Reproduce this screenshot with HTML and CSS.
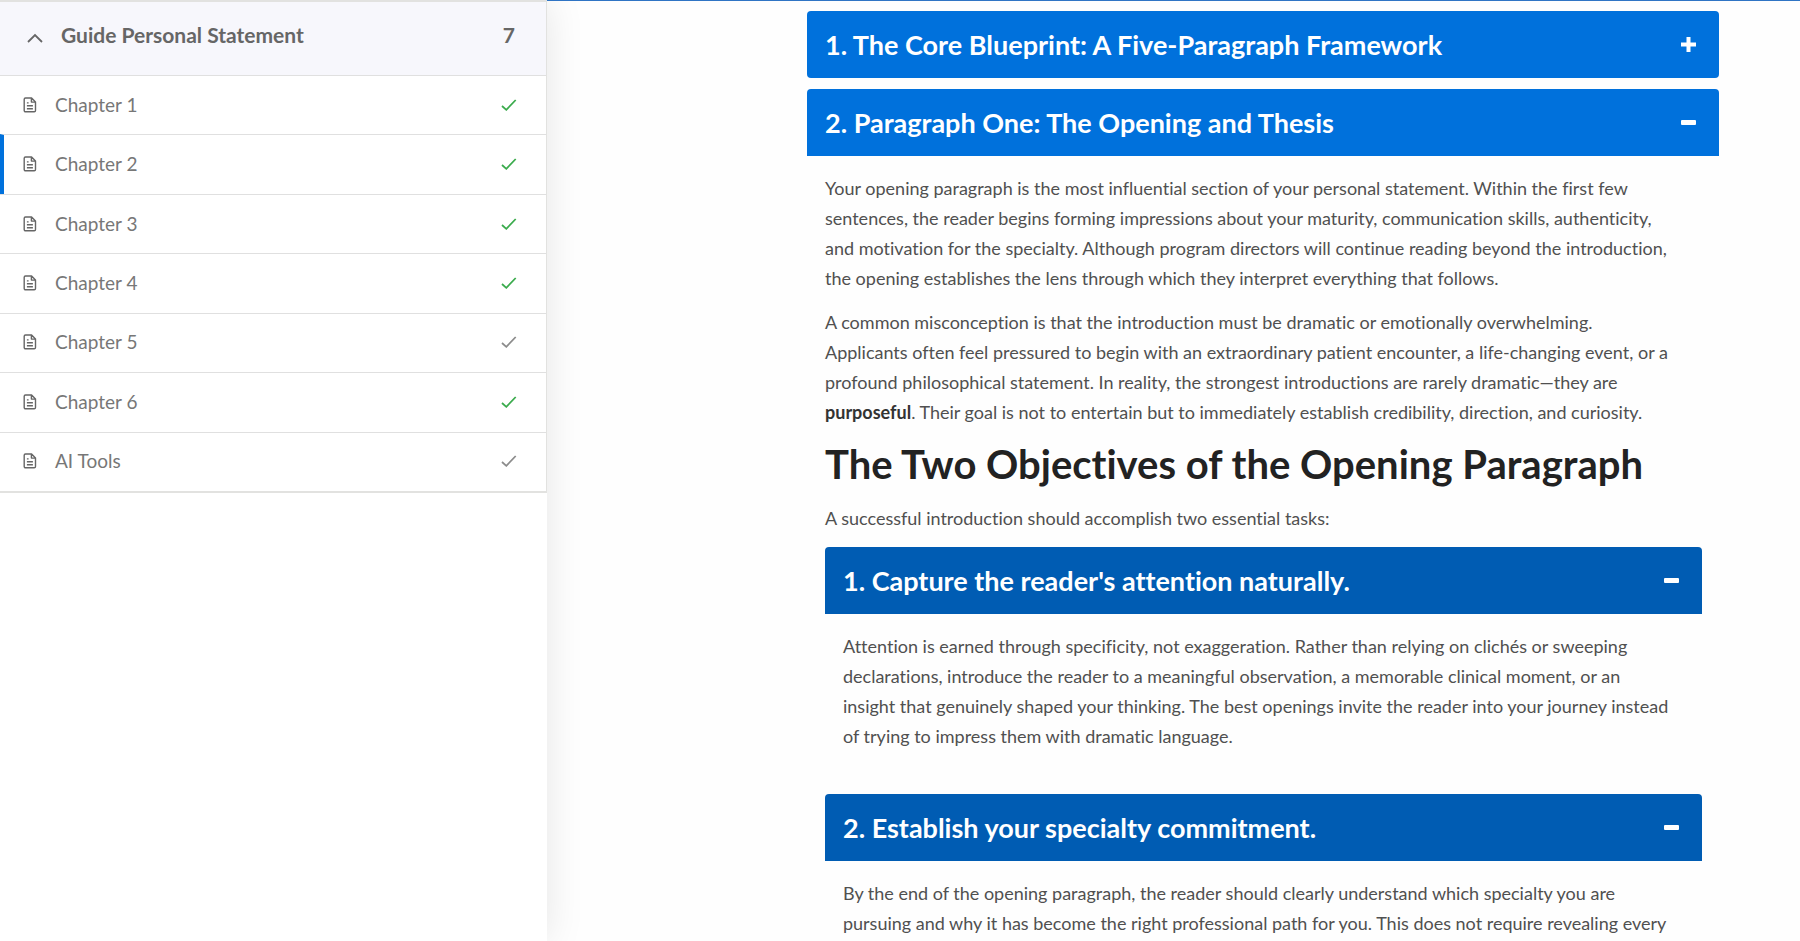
FILE: index.html
```html
<!DOCTYPE html>
<html lang="en">
<head>
  <meta charset="UTF-8" />
  <meta name="viewport" content="width=device-width, initial-scale=1.0" />
  <title>Guide Personal Statement</title>
  <link rel="stylesheet" href="styles.css">
</head>
<body>
  <!-- shared icons -->
  <svg class="sprite" aria-hidden="true">
    <symbol id="doc" viewBox="0 0 14 16">
      <path d="M2.5 1H8.6L12.5 4.9V13.5a1.3 1.3 0 0 1-1.3 1.3H2.5a1.3 1.3 0 0 1-1.3-1.3V2.3A1.3 1.3 0 0 1 2.5 1zM8.4 1.2V5.1H12.3M3.9 5.9H5.6M3.9 8.8H9.9M3.9 11.7H9.9" fill="none" stroke="currentColor" stroke-width="1.4" stroke-linejoin="round" />
    </symbol>
    <symbol id="check" viewBox="0 0 16 12">
      <path d="M1 7L5.3 10.8L14.7 1" fill="none" stroke="currentColor" stroke-width="1.8" />
    </symbol>
    <symbol id="plus" viewBox="0 0 15 15">
      <path d="M7.5 1.5V13.5M1.5 7.5H13.5" stroke="currentColor" stroke-width="4" fill="none" stroke-linecap="square" />
    </symbol>
    <symbol id="minus" viewBox="0 0 15 15">
      <rect y="5" width="15" height="5" rx="1" fill="currentColor" />
    </symbol>
  </svg>

  <div class="layout">
    <aside class="sidebar">
      <nav class="section">
        <button class="section-head" aria-expanded="true">
          <svg class="chevron" viewBox="0 0 16 10"><path d="M1 9L8 2L15 9" fill="none" stroke="currentColor" stroke-width="1.8" /></svg>
          <span class="section-title">Guide Personal Statement</span>
          <span class="count">7</span>
        </button>
        <div class="lessons">
          <a class="lesson" href="#"><svg class="doc"><use href="#doc" /></svg><span>Chapter 1</span><svg class="check done"><use href="#check" /></svg></a>
          <a class="lesson active" href="#"><svg class="doc"><use href="#doc" /></svg><span>Chapter 2</span><svg class="check done"><use href="#check" /></svg></a>
          <a class="lesson" href="#"><svg class="doc"><use href="#doc" /></svg><span>Chapter 3</span><svg class="check done"><use href="#check" /></svg></a>
          <a class="lesson" href="#"><svg class="doc"><use href="#doc" /></svg><span>Chapter 4</span><svg class="check done"><use href="#check" /></svg></a>
          <a class="lesson" href="#"><svg class="doc"><use href="#doc" /></svg><span>Chapter 5</span><svg class="check"><use href="#check" /></svg></a>
          <a class="lesson" href="#"><svg class="doc"><use href="#doc" /></svg><span>Chapter 6</span><svg class="check done"><use href="#check" /></svg></a>
          <a class="lesson" href="#"><svg class="doc"><use href="#doc" /></svg><span>AI Tools</span><svg class="check"><use href="#check" /></svg></a>
        </div>
      </nav>
    </aside>

    <main class="content">
      <button class="bar closed" aria-expanded="false">
        <span>1. The Core Blueprint: A Five-Paragraph Framework</span>
        <svg class="sign"><use href="#plus" /></svg>
      </button>

      <button class="bar" aria-expanded="true">
        <span>2. Paragraph One: The Opening and Thesis</span>
        <svg class="sign"><use href="#minus" /></svg>
      </button>
      <div class="panel">
        <p>Your opening paragraph is the most influential section of your personal statement. Within the first few<br> sentences, the reader begins forming impressions about your maturity, communication skills, authenticity,<br> and motivation for the specialty. Although program directors will continue reading beyond the introduction,<br> the opening establishes the lens through which they interpret everything that follows.</p>
        <p>A common misconception is that the introduction must be dramatic or emotionally overwhelming.<br> Applicants often feel pressured to begin with an extraordinary patient encounter, a life-changing event, or a<br> profound philosophical statement. In reality, the strongest introductions are rarely dramatic—they are<br> <strong>purposeful</strong>. Their goal is not to entertain but to immediately establish credibility, direction, and curiosity.</p>
        <h1>The Two Objectives of the Opening Paragraph</h1>
        <p>A successful introduction should accomplish two essential tasks:</p>

        <button class="bar inner" aria-expanded="true">
          <span>1. Capture the reader's attention naturally.</span>
          <svg class="sign"><use href="#minus" /></svg>
        </button>
        <div class="panel">
          <p>Attention is earned through specificity, not exaggeration. Rather than relying on clichés or sweeping<br> declarations, introduce the reader to a meaningful observation, a memorable clinical moment, or an<br> insight that genuinely shaped your thinking. The best openings invite the reader into your journey instead<br> of trying to impress them with dramatic language.</p>
        </div>

        <button class="bar inner" aria-expanded="true">
          <span>2. Establish your specialty commitment.</span>
          <svg class="sign"><use href="#minus" /></svg>
        </button>
        <div class="panel last">
          <p>By the end of the opening paragraph, the reader should clearly understand which specialty you are<br> pursuing and why it has become the right professional path for you. This does not require revealing every</p>
        </div>
      </div>
    </main>
  </div>
</body>
</html>
```
FILE: styles.css
```css
* {
  box-sizing: border-box;
}

body {
  margin: 0;
  font-family: Lato, sans-serif;
  font-size: 18px;
  line-height: 30px;
  font-variant-ligatures: none;
  color: #505050;
  background: #fefefe;
}

button {
  width: 100%;
  border: none;
  font-family: inherit;
  font-variant-ligatures: none;
  text-align: left;
  cursor: pointer;
}

.sprite {
  display: none;
}

.layout {
  display: flex;
  min-height: 100vh;
}

/* sidebar */
.sidebar {
  width: 547px;
  flex-shrink: 0;
  background: #fff;
  box-shadow: 0 0 36px rgba(0, 0, 0, 0.1);
}

.section {
  border: 1px solid #e2e2e0;
  border-width: 2px 1px 2px 0;
}

.section-head {
  display: flex;
  align-items: center;
  height: 73px;
  padding: 0 31px 8px 27px;
  background: #f7f7fc;
  color: #666;
  font-size: 21px;
  font-weight: bold;
}

.chevron {
  width: 16px;
  height: 10px;
  margin: 6px 18px 0 0;
}

.section-title {
  flex: 1;
}

.lessons {
  display: grid;
  grid-auto-rows: 1fr;
  min-height: 416px;
}

.lesson {
  display: flex;
  align-items: center;
  padding: 0 29px 1px 23px;
  border-top: 1px solid #e0e0e0;
  color: #777;
  font-size: 19px;
  text-decoration: none;
}

.lesson span {
  flex: 1;
}

.lesson.active {
  padding-left: 19px;
  border-left: 4px solid #0071dc;
}

.doc {
  width: 14px;
  height: 16px;
  margin-right: 18px;
  color: #666;
}

.check {
  width: 16px;
  height: 12px;
  color: #8c8c8c;
}

.check.done {
  color: #3bab4d;
}

/* lesson text */
.content {
  flex: 1;
  padding: 10px 81px 0 260px;
  border-top: 1px solid #2f74c4;
}

.bar {
  display: flex;
  align-items: center;
  justify-content: space-between;
  height: 67px;
  padding: 0 23px 0 18px;
  border-radius: 4px 4px 0 0;
  background: #0071dc;
  color: #fff;
  font-size: 27px;
  font-weight: bold;
}

.bar.closed {
  margin-bottom: 11px;
  border-radius: 4px;
}

.bar.inner {
  background: #005cb3;
}

.sign {
  width: 15px;
  height: 15px;
}

.panel {
  padding: 17px 17px 0 18px;
}

.panel .panel {
  padding-bottom: 29px;
}

.panel .last {
  padding-bottom: 0;
}

.panel p {
  margin: 0 0 14px;
  white-space: nowrap;
}

.panel .last p {
  margin: 0;
}

.panel h1 {
  margin: 0 0 16px;
  color: #222;
  font-size: 40px;
  line-height: 46px;
}

strong {
  color: #333;
}
```
